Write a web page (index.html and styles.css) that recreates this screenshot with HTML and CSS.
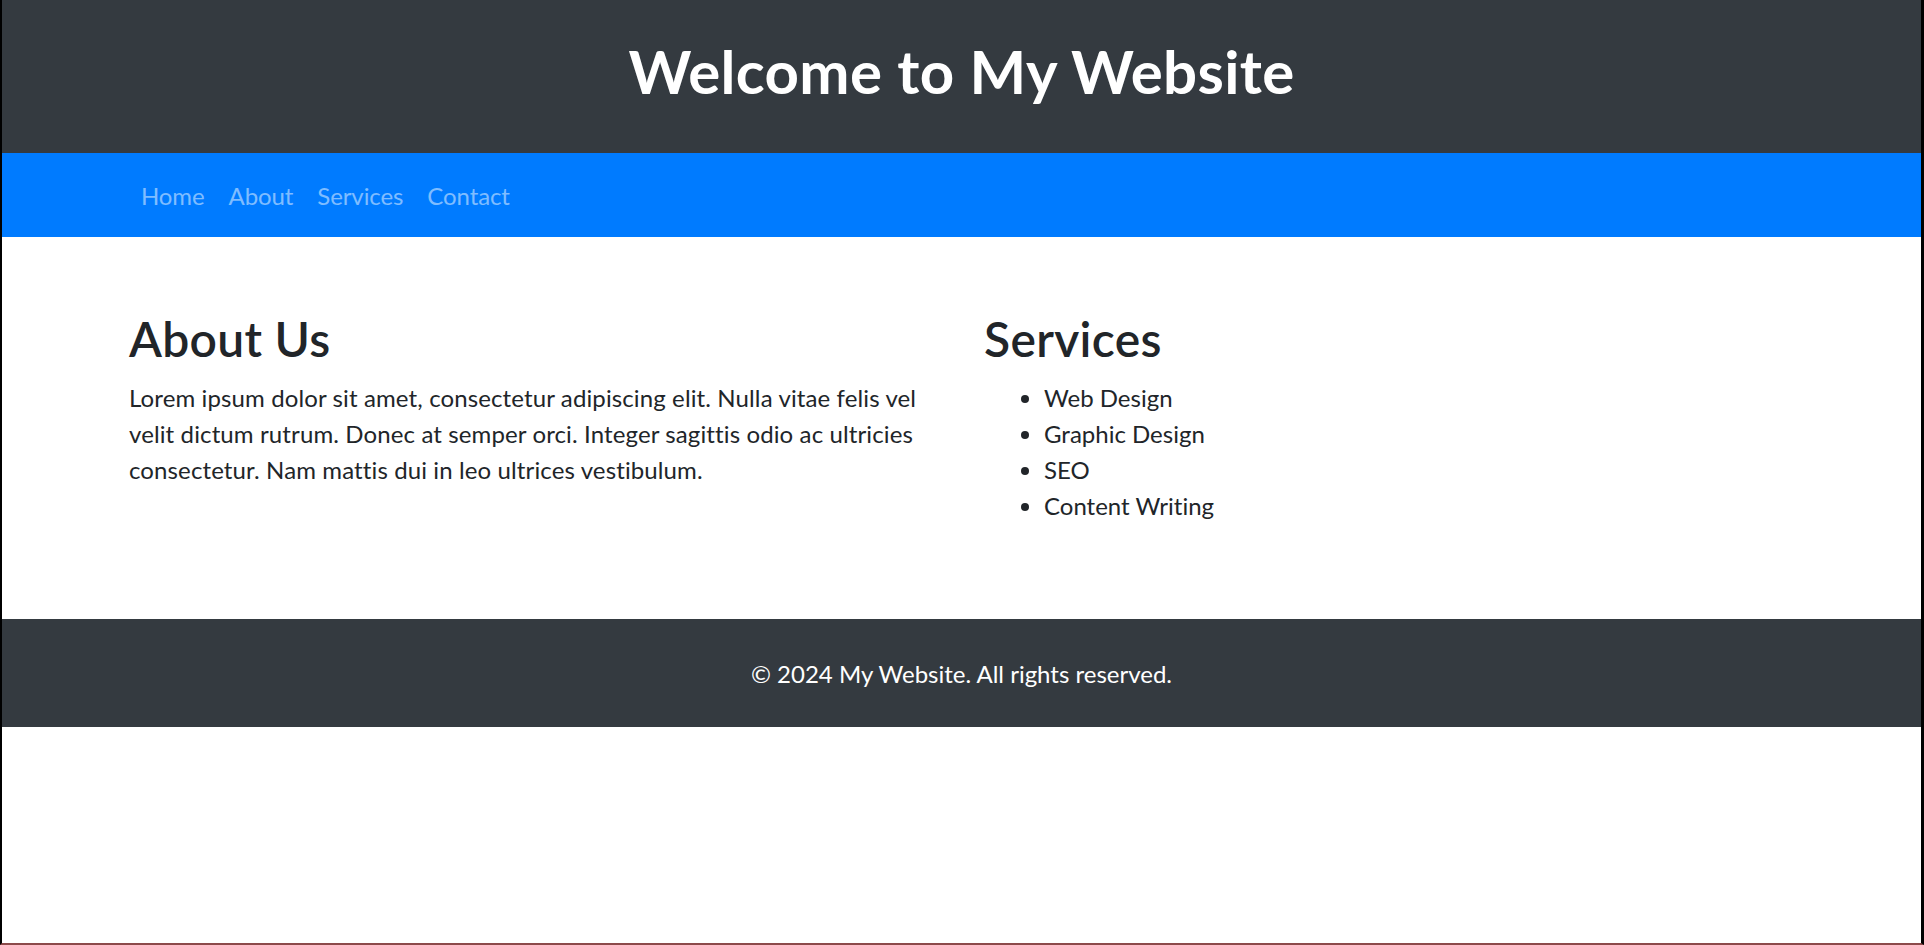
FILE: index.html
```html
<!DOCTYPE html>
<html lang="en">
<head>
<meta charset="utf-8">
<title>My Website</title>
<link rel="stylesheet" href="styles.css">
</head>
<body>
<div class="frame">
  <header class="site-header">
    <h1 class="site-title">Welcome to My Website</h1>
  </header>
  <nav class="site-nav">
    <div class="container">
      <ul class="nav-list">
        <li><a class="nav-link" href="#">Home</a></li>
        <li><a class="nav-link" href="#">About</a></li>
        <li><a class="nav-link" href="#">Services</a></li>
        <li><a class="nav-link" href="#">Contact</a></li>
      </ul>
    </div>
  </nav>
  <main class="content">
    <div class="container columns">
      <section class="col">
        <h2 class="section-title">About Us</h2>
        <p class="text">Lorem ipsum dolor sit amet, consectetur adipiscing elit. Nulla vitae felis vel velit dictum rutrum. Donec at semper orci. Integer sagittis odio ac ultricies consectetur. Nam mattis dui in leo ultrices vestibulum.</p>
      </section>
      <section class="col">
        <h2 class="section-title">Services</h2>
        <ul class="service-list">
          <li>Web Design</li>
          <li>Graphic Design</li>
          <li>SEO</li>
          <li>Content Writing</li>
        </ul>
      </section>
    </div>
  </main>
  <footer class="site-footer">
    <p class="footer-text">&copy; 2024 My Website. All rights reserved.</p>
  </footer>
</div>
</body>
</html>
```

FILE: styles.css
```css
* { box-sizing: border-box; }

html, body {
  margin: 0;
  padding: 0;
}

body {
  font-family: "Lato", "Open Sans", "Liberation Sans", sans-serif;
  font-size: 24px;
  line-height: 36px;
  letter-spacing: 0.12px;
  font-variant-ligatures: none;
  color: #212529;
  background: #fff;
}

.frame {
  min-height: 100vh;
  border-left: 2px solid #000;
  border-right: 3px solid #000;
  border-bottom: 2px solid #8c4a4a;
}

.container {
  max-width: 1710px;
  margin: 0 auto;
  padding: 0 22.5px;
}

.site-header {
  background: #343a40;
  color: #fff;
  text-align: center;
  padding: 35px 0 46px;
}

.site-title {
  margin: 0;
  font-size: 60px;
  line-height: 72px;
  font-weight: 700;
  letter-spacing: 0.35px;
}

.site-nav {
  background: #007bff;
  padding: 13px 0 11px;
}

.nav-list {
  list-style: none;
  margin: 0;
  padding: 0;
  display: flex;
}

.nav-link {
  display: block;
  padding: 12px 12px;
  color: rgba(255, 255, 255, 0.5);
  text-decoration: none;
  letter-spacing: -0.1px;
}

.content {
  padding: 73px 0 71px;
}

.columns {
  display: grid;
  grid-template-columns: 1fr 1fr;
  column-gap: 45px;
}

.col {
  min-width: 0;
}

.section-title {
  margin: 0 0 12px;
  font-size: 48px;
  line-height: 57.6px;
  font-weight: 600;
  letter-spacing: 0.3px;
}

.text {
  margin: 0 0 24px;
}

.service-list {
  margin: 0 0 24px;
  padding-left: 60px;
  letter-spacing: 0;
}

.site-footer {
  background: #343a40;
  color: #fff;
  text-align: center;
  padding: 37px 0 35px;
}

.footer-text {
  margin: 0;
  letter-spacing: 0;
}
```
